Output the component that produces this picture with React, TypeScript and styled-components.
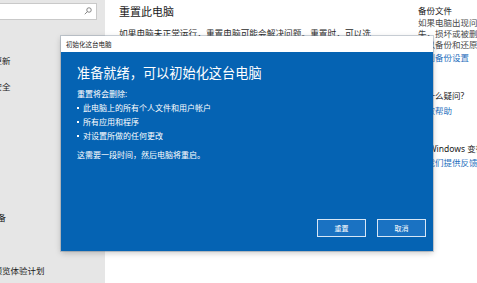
import React from "react";
import styled, { createGlobalStyle } from "styled-components";

const FONT = `"Noto Sans", "Noto Sans CJK SC", sans-serif`;

const Global = createGlobalStyle`
  html, body { margin: 0; padding: 0; }
  body {
    width: 477px;
    height: 283px;
    overflow: hidden;
    font-family: ${FONT};
    background: #ffffff;
  }
`;

const Window = styled.div`
  position: relative;
  display: flex;
  width: 477px;
  height: 283px;
  overflow: hidden;
`;

const Sidebar = styled.aside`
  width: 105px;
  flex: none;
  background: #e6e6e6;
  display: flex;
  flex-direction: column;
`;

const SearchBox = styled.div`
  margin: 3px 8px 0 -10px;
  height: 18px;
  box-sizing: border-box;
  background: #ffffff;
  border: 1px solid #c9c9c9;
  display: flex;
  align-items: center;
  justify-content: flex-end;
  padding-right: 4px;
`;

const NavList = styled.nav`
  margin: 27px 0 0 -45px;
  display: flex;
  flex-direction: column;
`;

const NavItem = styled.div`
  height: 26.25px;
  display: flex;
  align-items: center;
  font-size: 8.5px;
  color: #1a1a1a;
  white-space: nowrap;
`;

const Main = styled.main`
  flex: 1;
  display: flex;
  background: #ffffff;
`;

const Content = styled.section`
  width: 313px;
  flex: none;
  box-sizing: border-box;
  padding: 4px 0 0 14px;
`;

const PageTitle = styled.h1`
  margin: 0;
  font-size: 11px;
  line-height: 16px;
  font-weight: 400;
  color: #1a1a1a;
`;

const Paragraph = styled.p`
  margin: 8px 0 0;
  max-width: 252px;
  font-size: 8.7px;
  line-height: 12px;
  color: #2b2b2b;
`;

const Aside = styled.section`
  display: flex;
  flex-direction: column;
  padding-top: 5px;
  white-space: nowrap;
`;

const AsideHeading = styled.div<{ $gap?: number }>`
  margin-top: ${(p) => p.$gap ?? 0}px;
  font-size: 8.5px;
  line-height: 12px;
  color: #1a1a1a;
`;

const AsideText = styled.div`
  font-size: 8.5px;
  line-height: 11px;
  color: #4a4a4a;
`;

const AsideLink = styled.div<{ $gap?: number }>`
  margin-top: ${(p) => p.$gap ?? 0}px;
  font-size: 8.5px;
  line-height: 12px;
  color: #1f6fbd;
`;

const Dialog = styled.div`
  position: absolute;
  left: 61px;
  top: 36px;
  width: 372px;
  height: 215px;
  display: flex;
  flex-direction: column;
  box-shadow: 0 2px 6px rgba(0, 0, 0, 0.22), 0 0 0 1px rgba(120, 140, 160, 0.35);
`;

const TitleBar = styled.div`
  height: 16px;
  flex: none;
  background: #ffffff;
  display: flex;
  align-items: center;
  padding-left: 5px;
  font-size: 6.5px;
  color: #222;
`;

const Body = styled.div`
  flex: 1;
  background: #0563b3;
  display: flex;
  flex-direction: column;
  padding: 12px 7px 14px 16px;
  color: #ffffff;
`;

const Heading = styled.h2`
  margin: 0;
  font-size: 13.2px;
  line-height: 18px;
  font-weight: 400;
`;

const Intro = styled.div`
  margin-top: 5px;
  font-size: 8px;
  line-height: 14px;
`;

const BulletList = styled.ul`
  margin: 0;
  padding: 0;
  list-style: none;
`;

const Bullet = styled.li`
  display: flex;
  align-items: center;
  font-size: 8px;
  line-height: 14px;
  &::before {
    content: "";
    width: 2px;
    height: 2px;
    background: #ffffff;
    margin-right: 4px;
  }
`;

const Note = styled.div`
  margin-top: 5px;
  font-size: 8px;
  line-height: 14px;
`;

const Actions = styled.div`
  margin-top: auto;
  display: flex;
  justify-content: flex-end;
  gap: 11px;
`;

const Button = styled.button`
  width: 49px;
  height: 18px;
  box-sizing: border-box;
  background: #1a72c2;
  border: 1px solid #d6e6f6;
  color: #ffffff;
  font-family: ${FONT};
  font-size: 7px;
  padding: 0;
`;

const SearchIcon = () => (
  <svg width="8" height="8" viewBox="0 0 16 16" fill="none" stroke="#6b6b6b" strokeWidth="1.6">
    <circle cx="10" cy="6" r="4.5" />
    <line x1="6.8" y1="9.2" x2="1.5" y2="14.5" />
  </svg>
);

const navItems = [
  "Windows 更新",
  "Windows 安全",
  "备份",
  "疑难解答",
  "恢复",
  "激活",
  "查找我的设备",
  "开发者选项",
  "Windows 预览体验计划",
];

export default function App() {
  return (
    <>
      <Global />
      <Window>
        <Sidebar>
          <SearchBox>
            <SearchIcon />
          </SearchBox>
          <NavList>
            {navItems.map((t) => (
              <NavItem key={t}>{t}</NavItem>
            ))}
          </NavList>
        </Sidebar>
        <Main>
          <Content>
            <PageTitle>重置此电脑</PageTitle>
            <Paragraph>
              如果电脑未正常运行，重置电脑可能会解决问题。重置时，可以选择保留个人文件或删除个人文件，然后重新安装 Windows。
            </Paragraph>
          </Content>
          <Aside>
            <AsideHeading>备份文件</AsideHeading>
            <AsideText>如果电脑出现问题</AsideText>
            <AsideText>失，损坏或被删除</AsideText>
            <AsideText>可以备份和还原文件</AsideText>
            <AsideLink $gap={2}>转到备份设置</AsideLink>
            <AsideHeading $gap={26}>有什么疑问?</AsideHeading>
            <AsideLink $gap={3}>获取帮助</AsideLink>
            <AsideHeading $gap={26}>让 Windows 变得更好</AsideHeading>
            <AsideLink $gap={2}>向我们提供反馈</AsideLink>
          </Aside>
        </Main>
        <Dialog>
          <TitleBar>初始化这台电脑</TitleBar>
          <Body>
            <Heading>准备就绪，可以初始化这台电脑</Heading>
            <Intro>重置将会删除:</Intro>
            <BulletList>
              <Bullet>此电脑上的所有个人文件和用户帐户</Bullet>
              <Bullet>所有应用和程序</Bullet>
              <Bullet>对设置所做的任何更改</Bullet>
            </BulletList>
            <Note>这需要一段时间，然后电脑将重启。</Note>
            <Actions>
              <Button>重置</Button>
              <Button>取消</Button>
            </Actions>
          </Body>
        </Dialog>
      </Window>
    </>
  );
}
